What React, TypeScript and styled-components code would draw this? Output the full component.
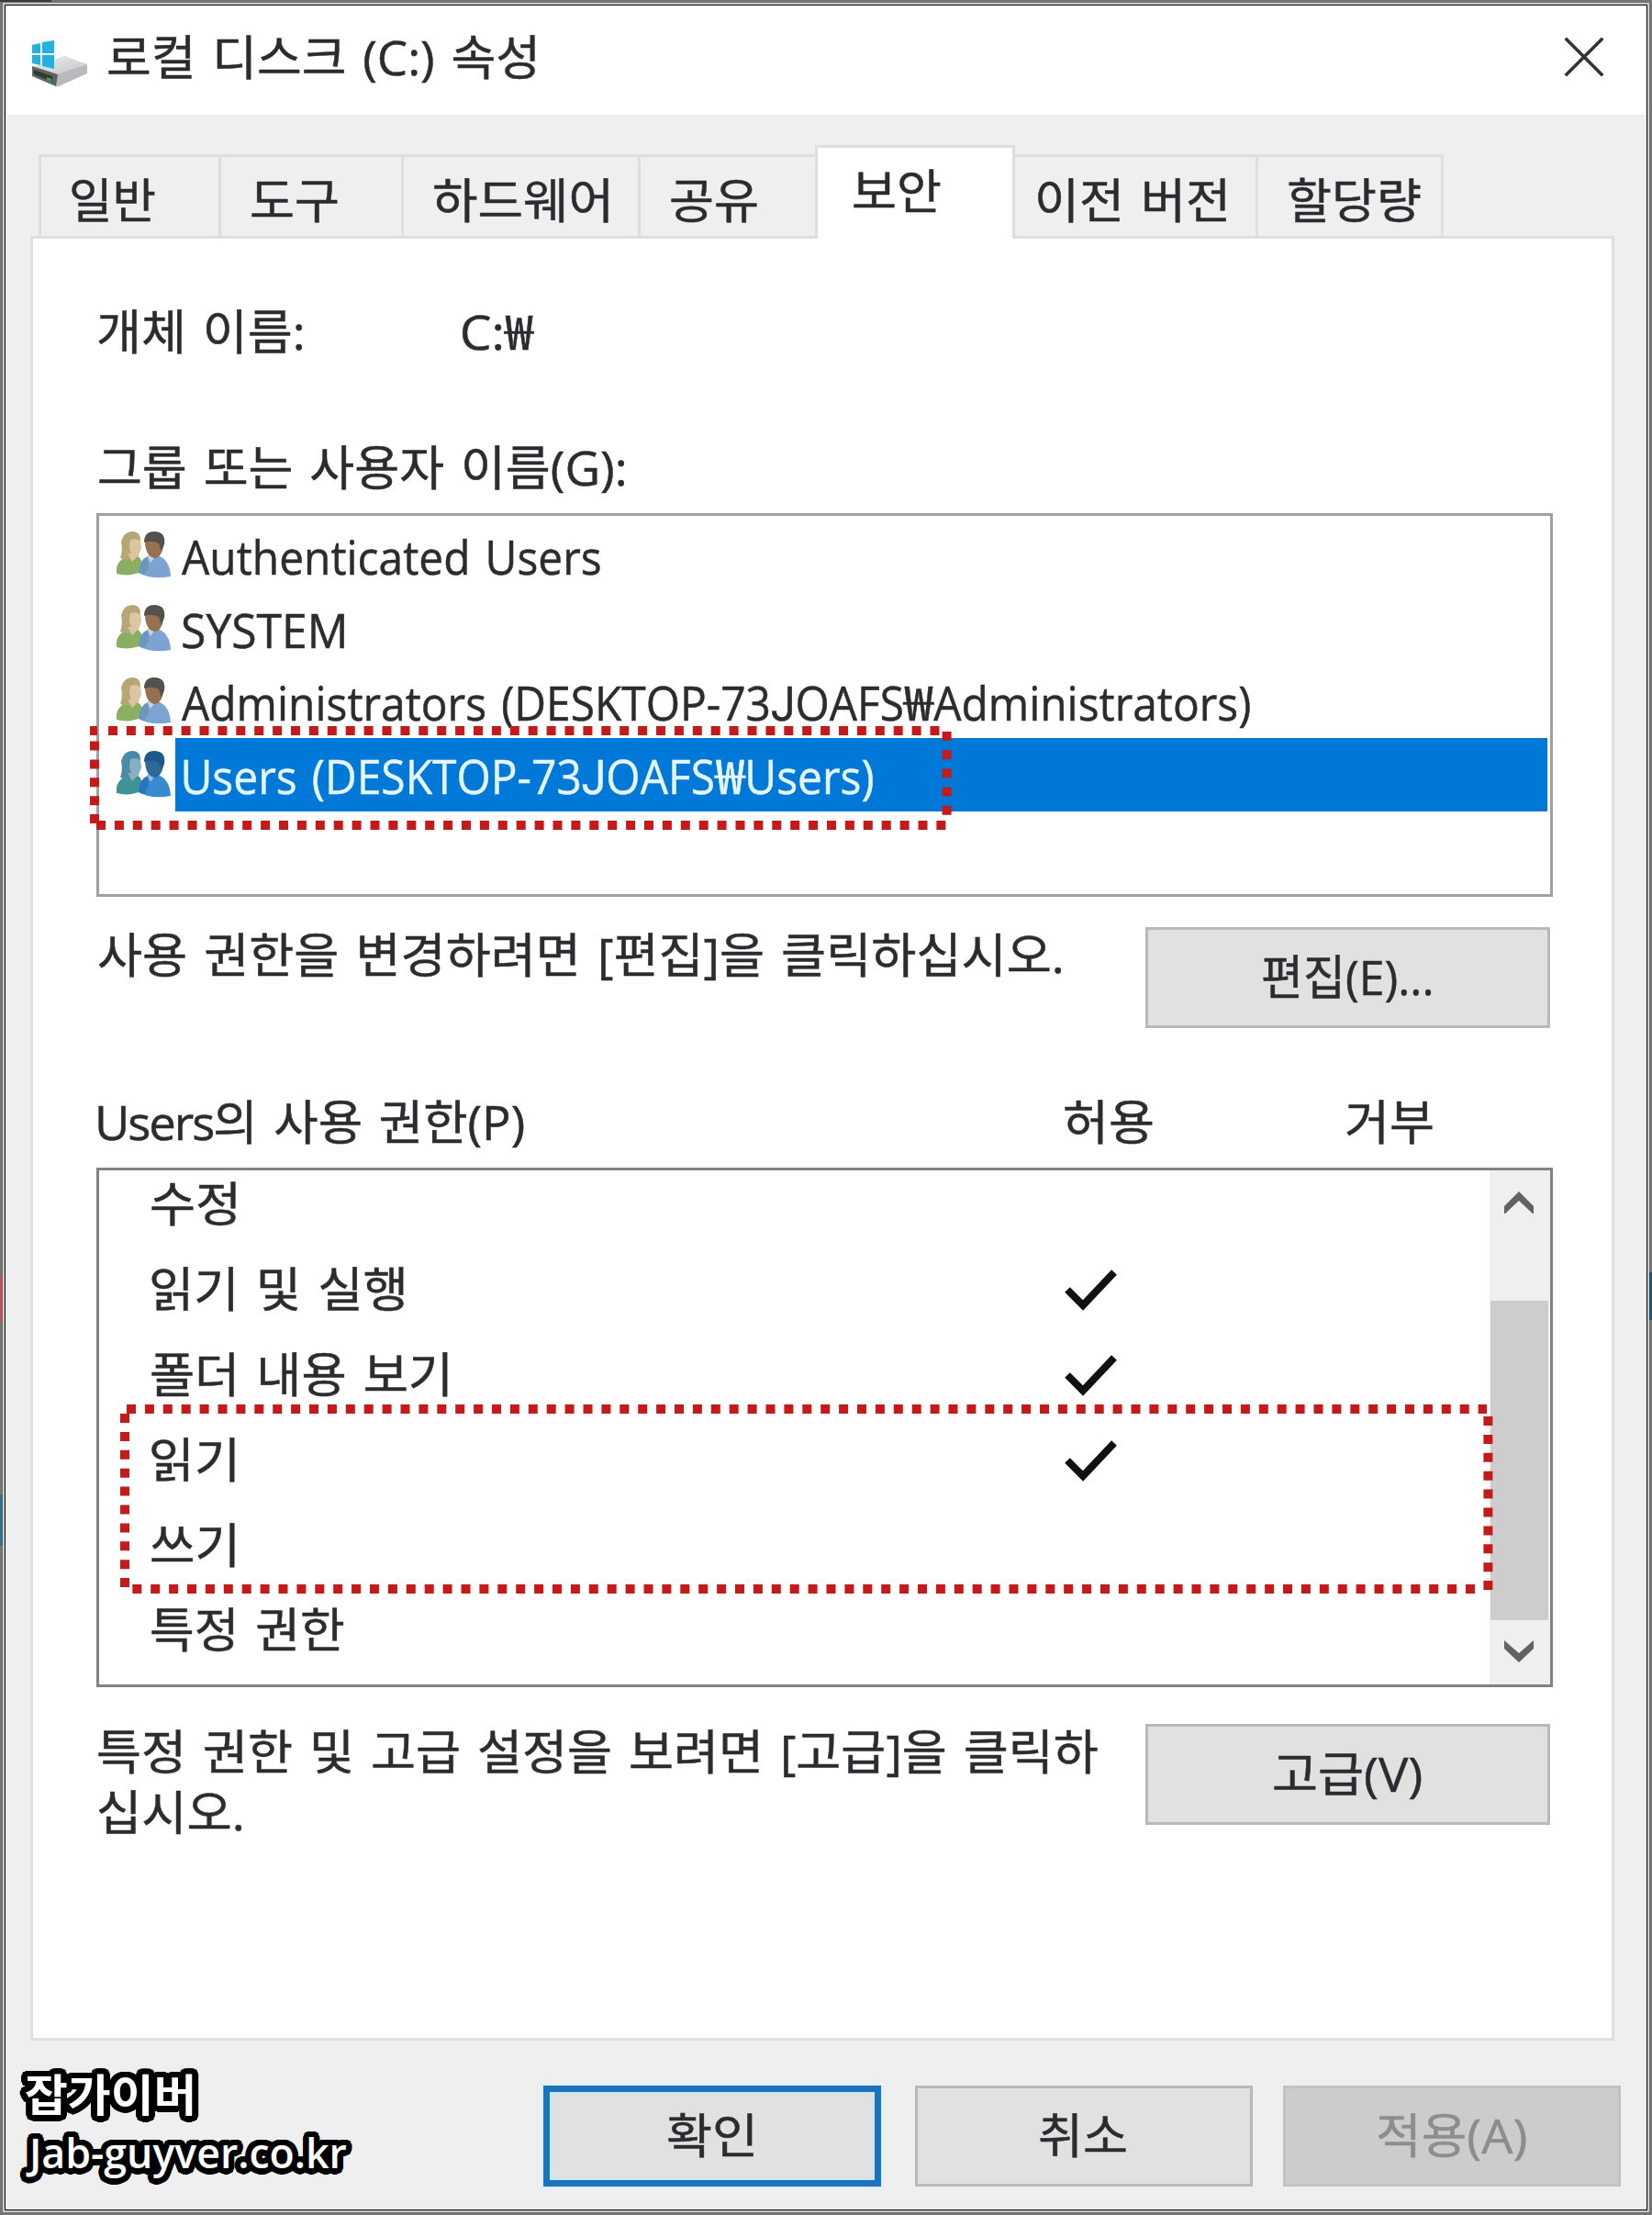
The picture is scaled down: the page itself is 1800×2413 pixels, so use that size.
import React, { useLayoutEffect, useRef, useState } from "react";
import styled, { createGlobalStyle, css } from "styled-components";

const FONT = '"Open Sans", "Noto Sans CJK KR", sans-serif';

const GlobalStyle = createGlobalStyle`
  *, *::before, *::after { box-sizing: border-box; }
  body { margin: 0; background: #757575; }
`;

/* ---------- text fitted to an exact ink width ---------- */

const FitBox = styled.span<{ $w: number; $h: number }>`
  display: block;
  flex: none;
  width: ${(p) => p.$w}px;
  height: ${(p) => p.$h}px;
`;

const FitInner = styled.span<{ $h: number; $size: number; $weight: number; $gap: number }>`
  display: inline-block;
  white-space: pre;
  font-family: ${FONT};
  font-size: ${(p) => p.$size}px;
  font-weight: ${(p) => p.$weight};
  line-height: ${(p) => p.$h}px;
  word-spacing: ${(p) => p.$gap}px;
  -webkit-text-stroke: ${(p) => (p.$weight === 400 ? 0.5 : 0)}px currentColor;
  transform-origin: 0 50%;
`;

const StraightJ = styled.span`
  font-family: Roboto, sans-serif;
`;

const WonSign = styled.span`
  display: inline-block;
  margin: 0 3px;
  transform: scaleX(1.2);
`;

const Tight = styled.span`
  letter-spacing: -2px;
`;

type FitProps = {
  w: number;
  children: React.ReactNode;
  size?: number;
  weight?: number;
  h?: number;
  gap?: number;
  bearing?: [number, number];
};

function Fit({ w, children, size = 52, weight = 400, h = 60, gap = 4, bearing = [0, 0] }: FitProps) {
  const ref = useRef<HTMLSpanElement>(null);
  const [fit, setFit] = useState({ scale: 1, shift: 0 });
  const [left, right] = bearing;
  useLayoutEffect(() => {
    if (typeof children !== "string") {
      const scale = w / (ref.current!.offsetWidth - left - right);
      setFit({ scale, shift: -left * scale });
      return;
    }
    const ctx = document.createElement("canvas").getContext("2d") as any;
    ctx.font = `${weight} ${size}px ${FONT}`;
    ctx.wordSpacing = `${gap}px`;
    const m = ctx.measureText(children);
    const scale = w / (m.actualBoundingBoxLeft + m.actualBoundingBoxRight);
    setFit({ scale, shift: m.actualBoundingBoxLeft * scale });
  }, [w, size, weight, gap, left, right]);
  return (
    <FitBox $w={w} $h={h}>
      <FitInner
        ref={ref}
        $h={h}
        $size={size}
        $weight={weight}
        $gap={gap}
        style={{ transform: `translateX(${fit.shift}px) scaleX(${fit.scale})` }}
      >
        {children}
      </FitInner>
    </FitBox>
  );
}

/* ---------- window ---------- */

const Desktop = styled.div`
  width: 1800px;
  height: 2413px;
  padding: 5px;
  background:
    linear-gradient(#3b3b3b, #3b3b3b) 0 0 / 56px 2px no-repeat,
    linear-gradient(#a85a5a, #a85a5a) 0 1388px / 3px 52px no-repeat,
    linear-gradient(#3c6b86, #3c6b86) 0 1628px / 3px 56px no-repeat,
    linear-gradient(#23536b, #23536b) 1796px 1386px / 4px 52px no-repeat,
    #747474;
`;

const Window = styled.div`
  position: relative;
  width: 1790px;
  height: 2403px;
  border: 1px solid #000;
  box-shadow: 0 0 0 2px #c9c9c9;
  background: #efefef;
  color: #2c2c30;
`;

const TitleBar = styled.header`
  display: flex;
  align-items: flex-start;
  height: 119px;
  padding: 26px 46px 0 26px;
  background: #fff;
`;

const DriveIcon = styled.svg`
  width: 64px;
  height: 52px;
  margin: 11px 22px 0 0;
`;

const CloseIcon = styled.svg`
  width: 44px;
  height: 44px;
  margin: 8px 0 0 auto;
`;

/* ---------- tabs ---------- */

const TabStrip = styled.nav`
  display: flex;
  align-items: flex-end;
  height: 132px;
  padding-left: 36px;
`;

const Tab = styled.div<{ $w: number; $pad: number; $active?: boolean; $last?: boolean; $joined?: boolean }>`
  width: ${(p) => p.$w}px;
  height: 89px;
  padding: 17px 0 0 ${(p) => p.$pad}px;
  border-top: 3px solid #dedede;
  border-left: ${(p) => (p.$joined ? 0 : 3)}px solid #dedede;
  border-right: ${(p) => (p.$last ? 3 : 0)}px solid #dedede;
  ${(p) =>
    p.$active &&
    css`
      position: relative;
      z-index: 1;
      height: 102px;
      margin-bottom: -3px;
      border-right-width: 3px;
      background: #fff;
    `}
`;

const Page = styled.main`
  width: 1726px;
  height: 1966px;
  margin-left: 27px;
  padding: 71px 64px 0 69px;
  border: 3px solid #dfdfdf;
  background: #fff;
`;

const ObjectRow = styled.div`
  display: flex;
  gap: 175px;
  padding-left: 2px;
`;

const GroupLabel = styled.div`
  padding: 88px 0 0 3px;
`;

/* ---------- group list ---------- */

const GroupList = styled.div`
  height: 418px;
  margin-top: 20px;
  padding: 3px 3px 0 19px;
  border: 3px solid #a0a0a3;
`;

const GroupRow = styled.div`
  display: flex;
  height: 79.6px;
`;

const PeopleIcon = styled.svg`
  flex: none;
  width: 60px;
  height: 52px;
  margin-top: 13px;
`;

const GroupName = styled.div<{ $selected?: boolean; $pad: number }>`
  display: flex;
  flex: 1;
  height: 80px;
  margin-left: 4px;
  padding: 11px 0 0 ${(p) => p.$pad}px;
  ${(p) => p.$selected && "background: #0078d7; color: #e4f5ff;"}
`;

/* ---------- buttons ---------- */

const ActionRow = styled.div<{ $gap: number }>`
  display: flex;
  justify-content: space-between;
  margin-top: ${(p) => p.$gap}px;
  padding: 0 3px 0 2px;
`;

const Hint = styled.div`
  display: flex;
  flex-direction: column;
  gap: 6px;
`;

const Button = styled.button<{ $w: number; $kind?: "primary" | "disabled" }>`
  display: flex;
  align-items: center;
  justify-content: center;
  width: ${(p) => p.$w}px;
  height: 110px;
  padding: 0 3px 3px 0;
  border: 3px solid #b9b9b9;
  border-radius: 0;
  background: #e1e1e1;
  color: inherit;
  ${(p) =>
    p.$kind === "primary" &&
    css`
      border: 7px solid #1a73bb;
      box-shadow: inset 0 0 3px 2px #c9e6f9, 0 0 4px 1px #d3effc;
    `}
  ${(p) => p.$kind === "disabled" && "border-color: #c2c2c2; background: #ccc; color: #8d8d8f;"}
`;

/* ---------- permissions ---------- */

const PermissionHeader = styled.div`
  display: grid;
  grid-template-columns: 1052px 307px auto;
  margin-top: 72px;
  padding-left: 3px;
`;

const PermissionList = styled.div`
  display: flex;
  justify-content: space-between;
  height: 566px;
  margin-top: 20px;
  overflow: hidden;
  border: 3px solid #828282;
`;

const PermissionRows = styled.div`
  margin-top: -10px;
`;

const PermissionRow = styled.div`
  display: grid;
  grid-template-columns: 994px auto;
  align-items: center;
  height: 92.8px;
  padding-left: 57px;
`;

const CheckMark = styled.svg`
  width: 60px;
  height: 48px;
  margin-top: 2px;
`;

const ScrollBar = styled.div`
  display: flex;
  flex-direction: column;
  justify-content: space-between;
  align-items: center;
  width: 66px;
  padding: 23px 2px 24px 0;
  background: #efefef;
`;

const ScrollArrow = styled.svg`
  width: 32px;
  height: 24px;
`;

const Thumb = styled.div`
  width: 63px;
  height: 348px;
  margin-top: 72px;
  background: #cdcdcd;
`;

/* ---------- footer and overlays ---------- */

const Footer = styled.footer`
  display: flex;
  justify-content: flex-end;
  padding: 49px 28px 0 0;
`;

const FooterGap = styled.div<{ $w: number }>`
  width: ${(p) => p.$w}px;
`;

const outline = (steps: number, radius: number) =>
  Array.from({ length: steps }, (_, i) => {
    const a = (i / steps) * Math.PI * 2;
    return `${(Math.cos(a) * radius).toFixed(2)}px ${(Math.sin(a) * radius).toFixed(2)}px 0 #000`;
  });

const Watermark = styled.div`
  position: absolute;
  left: 22px;
  top: 2245px;
  color: #fff;
  text-shadow: ${[...outline(32, 6.5), ...outline(12, 3.5)].join(", ")};
`;

const Annotations = styled.svg`
  position: absolute;
  left: -6px;
  top: -6px;
  width: 1800px;
  height: 2413px;
  pointer-events: none;
`;

function People({ selected }: { selected?: boolean }) {
  const c = selected
    ? { hair: "#4b8aa6", face: "#86b1c4", green: "#3f9296", dark: "#1d5a8c", face2: "#2d6a97", blue: "#388ad0", shade: "#2876b8", collar: "#8fc1e2" }
    : { hair: "#b5a675", face: "#dcc6a2", green: "#8aaf62", dark: "#54524f", face2: "#96704f", blue: "#7ca3d2", shade: "#6b97bd", collar: "#c3d4e2" };
  return (
    <PeopleIcon viewBox="0 0 60 52">
      <path d="M0 47V41Q1 34 9 29L23 28Q29 31 29 44Q14 51 0 47Z" fill={c.green} />
      <path d="M4 30Q7 22 5 12Q8 1 17 1Q26 1 26 10L24 27Q14 34 4 30Z" fill={c.hair} />
      <path d="M15 10Q21 8 26 11L27 19Q25 28 19 27Q12 24 15 10Z" fill={c.face} />
      <path d="M12 25L17 34L24 27L21 25Z" fill={c.face} />
      <path d="M24 46Q25 32 34 28H47Q58 33 59 50Q38 54 24 46Z" fill={c.blue} />
      <path d="M24 46Q25 32 34 28L35 40L30 48Z" fill={c.shade} />
      <path d="M33 27L37 26L43 27L37 35Z" fill={c.collar} />
      <path d="M31 13Q32 2 42 2Q51 2 52 13L49 24Q46 30 41 30Q32 28 31 13Z" fill={c.face2} />
      <path d="M30 13Q30 1 41 1Q54 1 52 15L49 23L46 14Q38 10 30 13Z" fill={c.dark} />
    </PeopleIcon>
  );
}

function Drive() {
  return (
    <DriveIcon viewBox="0 0 64 52">
      <defs>
        <linearGradient id="lid" x1="0" y1="0" x2="1" y2="1">
          <stop offset="0" stopColor="#ececec" />
          <stop offset="1" stopColor="#c4c6c8" />
        </linearGradient>
      </defs>
      <path d="M3 30L38 18L63 27L30 39Z" fill="url(#lid)" />
      <path d="M30 38L63 27V37L32 51H28Z" fill="#b9babd" />
      <path d="M3 29L31 38L29 51L3 40Z" fill="#5c6560" />
      <path d="M5 33L25 40V46L5 38Z" fill="#2c3a32" />
      <path d="M19 41L24 43V46L19 44Z" fill="#4b9d5b" />
      <path d="M3 6L12 4V15H3ZM14 3L27 1V15H14ZM3 17H12V28L3 26ZM14 17H27V32L14 29Z" fill="#22b2e2" />
    </DriveIcon>
  );
}

function Account({ group }: { group: string }) {
  return (
    <>
      {group} (DESKTOP-73<StraightJ>J</StraightJ>OAFS<WonSign>₩</WonSign>{group})
    </>
  );
}

const GROUPS = [
  { id: "auth", name: "Authenticated Users", w: 456, pad: 7 },
  { id: "system", name: "SYSTEM", w: 176, pad: 8 },
  { id: "admins", name: <Account group="Administrators" />, w: 1162, pad: 7, bearing: [0, 4] },
  { id: "users", name: <Account group="Users" />, w: 748, pad: 10, bearing: [5, 4], selected: true },
];

const PERMISSIONS = [
  { name: "수정", w: 92 },
  { name: "읽기 및 실행", w: 275, allow: true },
  { name: "폴더 내용 보기", w: 323, allow: true },
  { name: "읽기", w: 91, allow: true },
  { name: "쓰기", w: 91 },
  { name: "특정 권한", w: 210 },
];

export default function App() {
  return (
    <>
      <GlobalStyle />
      <Desktop>
        <Window>
          <TitleBar>
            <Drive />
            <Fit w={465}>로컬 디스크 (C:) 속성</Fit>
            <CloseIcon viewBox="0 0 44 44">
              <path d="M3 3L41 41M41 3L3 41" stroke="#333" strokeWidth="3.6" strokeLinecap="square" />
            </CloseIcon>
          </TitleBar>
          <TabStrip>
            <Tab $w={196} $pad={33}><Fit w={91}>일반</Fit></Tab>
            <Tab $w={199} $pad={33}><Fit w={94}>도구</Fit></Tab>
            <Tab $w={258} $pad={33}><Fit w={190}>하드웨어</Fit></Tab>
            <Tab $w={193} $pad={33}><Fit w={94}>공유</Fit></Tab>
            <Tab $w={218} $pad={39} $active><Fit w={95}>보안</Fit></Tab>
            <Tab $w={262} $pad={25} $joined><Fit w={205}>이전 버전</Fit></Tab>
            <Tab $w={205} $pad={33} $last><Fit w={144}>할당량</Fit></Tab>
          </TabStrip>
          <Page>
            <ObjectRow>
              <Fit w={222}>개체 이름:</Fit>
              <Fit w={78}>C:₩</Fit>
            </ObjectRow>
            <GroupLabel><Fit w={572}>그룹 또는 사용자 이름(G):</Fit></GroupLabel>
            <GroupList>
              {GROUPS.map((g) => (
                <GroupRow key={g.id}>
                  <People selected={g.selected} />
                  <GroupName $selected={g.selected} $pad={g.pad}>
                    <Fit w={g.w} bearing={g.bearing as [number, number] | undefined}>{g.name}</Fit>
                  </GroupName>
                </GroupRow>
              ))}
            </GroupList>
            <ActionRow $gap={33}>
              <Hint><Fit w={1049}>사용 권한을 변경하려면 [편집]을 클릭하십시오.</Fit></Hint>
              <Button $w={441}><Fit w={183}>편집(E)...</Fit></Button>
            </ActionRow>
            <PermissionHeader>
              <Fit w={460} bearing={[5, 4]}><Tight>Users</Tight>의 사용 권한(P)</Fit>
              <Fit w={96}>허용</Fit>
              <Fit w={94}>거부</Fit>
            </PermissionHeader>
            <PermissionList>
              <PermissionRows>
                {PERMISSIONS.map((p) => (
                  <PermissionRow key={p.name}>
                    <Fit w={p.w}>{p.name}</Fit>
                    {p.allow && (
                      <CheckMark viewBox="0 0 60 48">
                        <path d="M4 24L21 41L55 5" fill="none" stroke="#111" strokeWidth="8" />
                      </CheckMark>
                    )}
                  </PermissionRow>
                ))}
              </PermissionRows>
              <ScrollBar>
                <ScrollArrow viewBox="0 0 32 24">
                  <path d="M0 16L16 0L32 16V25L16 10L0 25Z" fill="#626262" />
                </ScrollArrow>
                <Thumb />
                <ScrollArrow viewBox="0 0 32 24">
                  <path d="M0 9L16 24L32 9V0L16 14L0 0Z" fill="#626262" />
                </ScrollArrow>
              </ScrollBar>
            </PermissionList>
            <ActionRow $gap={40}>
              <Hint>
                <Fit w={1089}>특정 권한 및 고급 설정을 보려면 [고급]을 클릭하</Fit>
                <Fit w={156}>십시오.</Fit>
              </Hint>
              <Button $w={441}><Fit w={161}>고급(V)</Fit></Button>
            </ActionRow>
          </Page>
          <Footer>
            <Button $w={368} $kind="primary"><Fit w={93}>확인</Fit></Button>
            <FooterGap $w={37} />
            <Button $w={368}><Fit w={94}>취소</Fit></Button>
            <FooterGap $w={33} />
            <Button $w={368} $kind="disabled"><Fit w={162}>적용(A)</Fit></Button>
          </Footer>
          <Watermark>
            <Fit w={182} size={48} weight={700} h={62}>잡가이버</Fit>
            <Fit w={350} size={46} weight={600} h={62}>Jab-guyver.co.kr</Fit>
          </Watermark>
          <Annotations viewBox="0 0 1800 2413" fill="none" stroke="#c41a1a" strokeWidth="10">
            <path d="M98 796H106M118 796H1026" strokeDasharray="10 9.9" />
            <path d="M103 807.5V898" strokeDasharray="10 9.9" />
            <path d="M1031.6 797V888" strokeDasharray="10 10.2" />
            <path d="M105 899H1031" strokeDasharray="10 9.9" />
            <path d="M138 1535H1620" strokeDasharray="10 9.9" />
            <path d="M136 1540V1730" strokeDasharray="10 9.9" />
            <path d="M144.3 1731H1608" strokeDasharray="10 9.9" />
            <path d="M1621.4 1543V1715M1621.4 1722V1736" strokeDasharray="10 9.9" />
          </Annotations>
        </Window>
      </Desktop>
    </>
  );
}
